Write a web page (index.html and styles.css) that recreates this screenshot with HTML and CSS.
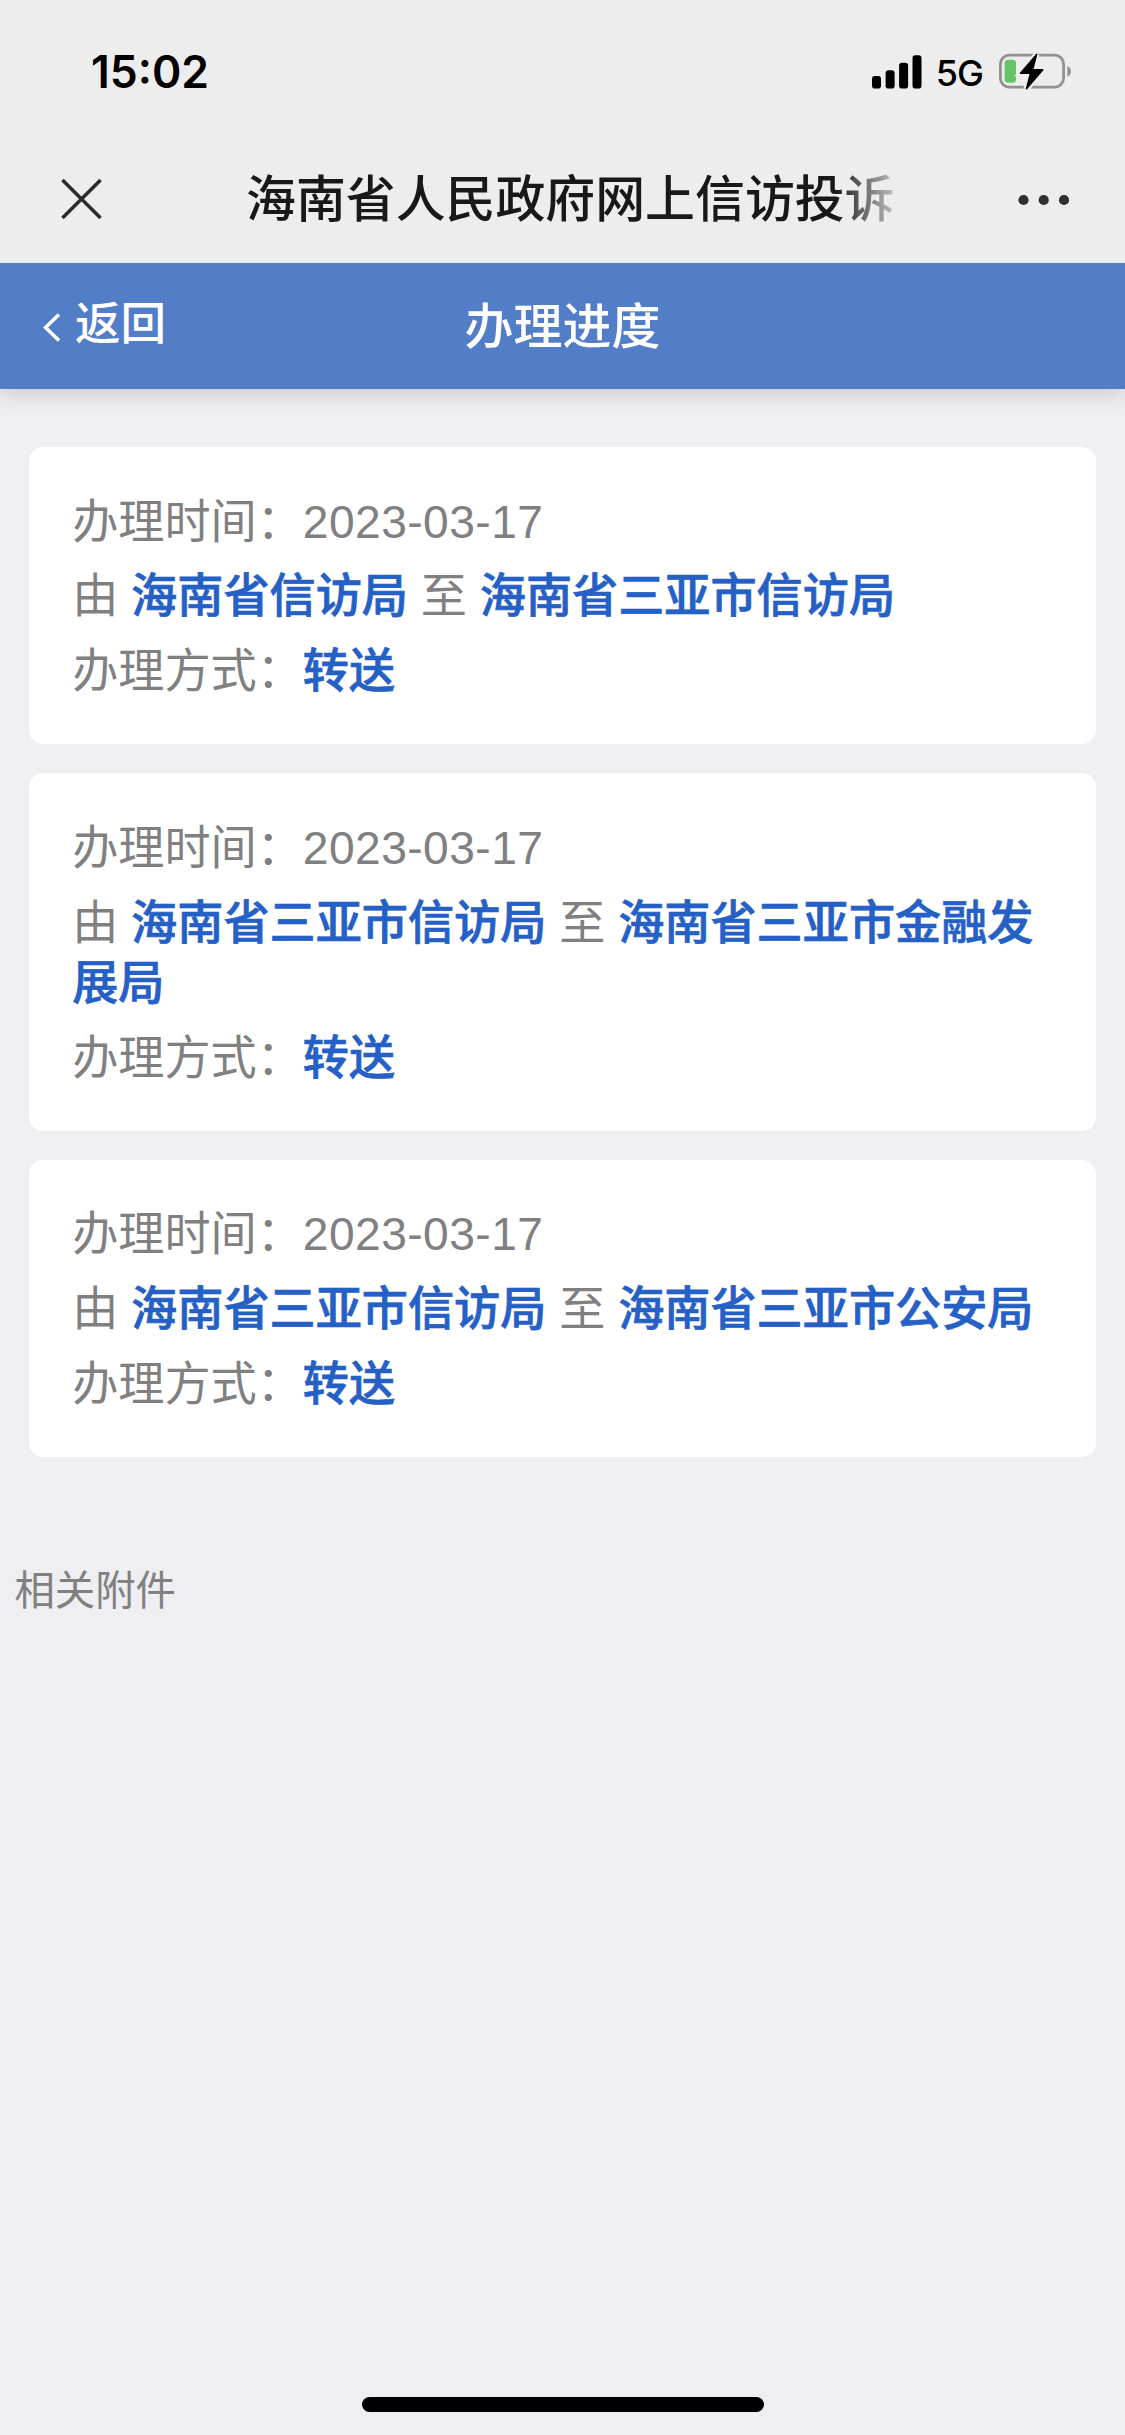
FILE: index.html
```html
<!DOCTYPE html>
<html lang="zh-CN">
<head>
<meta charset="utf-8">
<title>办理进度</title>
<link rel="stylesheet" href="styles.css">
</head>
<body>
<header class="chrome">
  <div class="status">
    <span class="clock">15:02</span>
    <div class="indicators">
      <svg class="signal" viewBox="0 0 50 34" aria-hidden="true">
        <rect x="0" y="21" width="9" height="12.5" rx="2.8"/>
        <rect x="13.6" y="15.3" width="9" height="18.2" rx="2.8"/>
        <rect x="27.1" y="7.7" width="9" height="25.8" rx="2.8"/>
        <rect x="40.5" y="0.3" width="9" height="33.2" rx="2.8"/>
      </svg>
      <span class="network">5G</span>
      <svg class="battery" viewBox="0 0 74 38" aria-hidden="true">
        <rect class="shell" x="1.4" y="2.2" width="63.2" height="32" rx="9"/>
        <path class="tip" d="M68.4 13c4.8 2 4.8 8.800 0 10.800z"/>
        <rect class="level" x="5.600" y="6.700" width="11.400" height="23" rx="3.500"/>
        <path class="bolt-gap" d="M37.600 1.500 21.500 20.200H31.500l-4 15.500L43.800 16.800H33.600z"/>
        <path class="bolt" d="M37.600 1.500 21.500 20.200H31.500l-4 15.500L43.800 16.800H33.600z"/>
      </svg>
    </div>
  </div>
  <div class="nav">
    <svg class="close" viewBox="0 0 42 42" aria-hidden="true"><path d="M1.500 1.500l39 39M40.500 1.500l-39 39"/></svg>
    <div class="site">海南省人民政府网上信访投诉</div>
    <svg class="more" viewBox="0 0 52 12" aria-hidden="true"><circle cx="5.500" cy="6" r="5.100"/><circle cx="25.700" cy="6" r="5.100"/><circle cx="46" cy="6" r="5.100"/></svg>
  </div>
</header>
<div class="titlebar">
  <a class="back"><svg viewBox="0 0 18 29" aria-hidden="true"><path d="M16 1.500 2.500 14.500 16 27.500"/></svg><span>返回</span></a>
  <h1>办理进度</h1>
</div>
<main>
  <section class="card">
    <p>办理时间：<time>2023-03-17</time></p>
    <p>由 <b>海南省信访局</b> 至 <b>海南省三亚市信访局</b></p>
    <p>办理方式：<b>转送</b></p>
  </section>
  <section class="card">
    <p>办理时间：<time>2023-03-17</time></p>
    <p>由 <b>海南省三亚市信访局</b> 至 <b>海南省三亚市金融发展局</b></p>
    <p>办理方式：<b>转送</b></p>
  </section>
  <section class="card">
    <p>办理时间：<time>2023-03-17</time></p>
    <p>由 <b>海南省三亚市信访局</b> 至 <b>海南省三亚市公安局</b></p>
    <p>办理方式：<b>转送</b></p>
  </section>
</main>
<h2 class="attachments">相关附件</h2>
<div class="home"></div>
</body>
</html>
```
FILE: styles.css
```css
* { box-sizing: border-box; }
body {
  margin: 0;
  height: 2435px;
  display: flex;
  flex-direction: column;
  background: #eeeef3;
  color: #808080;
  font-family: "Liberation Sans", "Noto Sans CJK SC", sans-serif;
}
h1, h2, p { margin: 0; font-weight: 400; }

.chrome { height: 263px; background: #ededed; }
.status {
  height: 136px;
  padding: 8px 52px 0 91px;
  display: flex;
  align-items: center;
  justify-content: space-between;
  color: #000;
  font-family: Inter, sans-serif;
}
.clock { font-size: 44.5px; font-weight: 600; }
.indicators { display: flex; align-items: center; }
.signal { width: 50px; height: 34px; }
.network { margin: 2px 16px 0 14px; font-size: 36px; font-weight: 500; letter-spacing: -1px; line-height: 40px; }
.battery { width: 74px; height: 38px; }
.shell { fill: none; stroke: #919191; stroke-width: 2.8; }
.tip { fill: #919191; }
.level { fill: #65c466; }
.bolt-gap { fill: #ededed; stroke: #ededed; stroke-width: 6; }
.bolt { fill: #000; stroke: #000; stroke-width: 1.5; stroke-linejoin: round; }
.nav {
  height: 127px;
  padding: 0 55px 2px 61px;
  display: flex;
  align-items: center;
}
.close { width: 41px; height: 42px; }
.close path { stroke: #2b2b2b; stroke-width: 3.6; }
.site {
  width: 650px;
  margin: 2px 0 0 144px;
  white-space: nowrap;
  color: #181818;
  font-size: 49.9px;
  font-weight: 500;
  line-height: 70px;
  -webkit-mask-image: linear-gradient(to right, #000 590px, transparent 663px);
  mask-image: linear-gradient(to right, #000 590px, transparent 663px);
}
.more { width: 52px; height: 12px; margin: 2px 0 0 auto; fill: #2f2f2f; }

.titlebar {
  height: 126px;
  padding: 0 43px;
  display: grid;
  grid-template-columns: 1fr auto 1fr;
  align-items: center;
  background: #527dc7;
  color: #fff;
  box-shadow: 0 3px 22px rgba(0, 0, 0, .18);
  clip-path: inset(0 0 -40px 0);
}
.back { display: flex; align-items: center; gap: 14px; font-size: 45.5px; line-height: 60px; font-weight: 500; }
.back span { margin-bottom: 2px; }
.back svg { width: 18px; height: 29px; margin-top: 3px; fill: none; stroke: #fff; stroke-width: 3.6; }
.titlebar h1 { padding-top: 2px; font-size: 49px; line-height: 60px; font-weight: 500; }

main {
  padding: 58px 28.85px 0;
  display: flex;
  flex-direction: column;
  gap: 29px;
}
.card {
  padding: 44.5px 43.3px 42.1px;
  display: flex;
  flex-direction: column;
  gap: 14.4px;
  background: #fff;
  border-radius: 14px;
  font-size: 46.15px;
  line-height: 60.6px;
}
.card time { letter-spacing: .45px; }
.card b { color: #2560c6; font-weight: 500; -webkit-text-stroke: .7px #2560c6; }
.attachments { margin: 104px 14.4px 0; font-size: 40.4px; line-height: 60px; }
.home { width: 402px; height: 15px; margin: auto auto 23px; border-radius: 8px; background: #000; }
```
